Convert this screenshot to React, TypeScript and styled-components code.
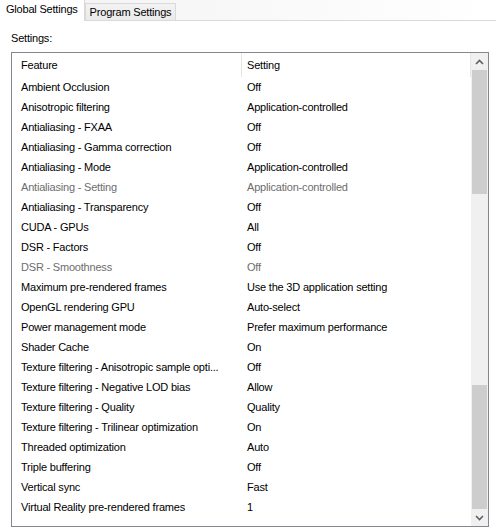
import React from "react";
import styled, { createGlobalStyle } from "styled-components";

const Global = createGlobalStyle`
  html, body { margin: 0; padding: 0; background: #ffffff; }
  body { font-family: "Liberation Sans", Arial, sans-serif; font-size: 11px; letter-spacing: -0.2px; color: #000; }
`;

const Page = styled.div`
  width: 496px;
  height: 530px;
  display: flex;
  flex-direction: column;
  overflow: hidden;
  background: #fff;
`;

const TabBar = styled.div`
  display: flex;
  align-items: flex-end;
  height: 21px;
  background: linear-gradient(to right, #f2f2f2, #ffffff);
`;

const Tab = styled.div<{ $active?: boolean }>`
  box-sizing: border-box;
  height: ${(p) => (p.$active ? "21px" : "18px")};
  padding: ${(p) => (p.$active ? "0 6px 3px 6px" : "0 4px 0 4px")};
  display: flex;
  align-items: center;
  background: ${(p) => (p.$active ? "#ffffff" : "linear-gradient(#f3f3f3, #ebebeb)")};
  border: 1px solid #d9d9d9;
  border-left: ${(p) => (p.$active ? "none" : "1px solid #d9d9d9")};
  border-bottom: ${(p) => (p.$active ? "none" : "1px solid #d9d9d9")};
  border-top: ${(p) => (p.$active ? "none" : "1px solid #d9d9d9")};
`;

const TabFill = styled.div`
  flex: 1;
  height: 1px;
  background: #d9d9d9;
`;

const Panel = styled.div`
  flex: 1;
  display: flex;
  flex-direction: column;
  padding: 9px 7px 4px 11px;
`;

const Label = styled.div`
  height: 21px;
  line-height: 14px;
  padding-top: 1px;
`;

const ListBox = styled.div`
  box-sizing: border-box;
  height: 475px;
  border: 1px solid #828790;
  display: flex;
`;

const Content = styled.div`
  flex: 1;
  display: flex;
  flex-direction: column;
`;

const Row = styled.div<{ $header?: boolean; $disabled?: boolean }>`
  display: grid;
  grid-template-columns: 230px 1fr;
  height: ${(p) => (p.$header ? "24px" : "20px")};
  align-items: center;
  color: ${(p) => (p.$disabled ? "#6d6d6d" : "#000")};
`;

const Cell = styled.div<{ $first?: boolean; $divider?: boolean }>`
  padding-left: ${(p) => (p.$first ? "9px" : "5px")};
  white-space: nowrap;
  overflow: hidden;
  height: 100%;
  display: flex;
  align-items: center;
  border-right: ${(p) => (p.$divider ? "1px solid #e5e5e5" : "none")};
`;

const Scrollbar = styled.div`
  width: 17px;
  display: flex;
  flex-direction: column;
  background: #f0f0f0;
`;

const Arrow = styled.div`
  height: 17px;
  display: flex;
  align-items: center;
  justify-content: center;
`;

const Thumb = styled.div<{ $h: number }>`
  height: ${(p) => p.$h}px;
  margin: 0 1px;
  background: #cdcdcd;
`;

const Track = styled.div`
  flex: 1;
`;

const rows: [string, string, boolean?][] = [
  ["Ambient Occlusion", "Off"],
  ["Anisotropic filtering", "Application-controlled"],
  ["Antialiasing - FXAA", "Off"],
  ["Antialiasing - Gamma correction", "Off"],
  ["Antialiasing - Mode", "Application-controlled"],
  ["Antialiasing - Setting", "Application-controlled", true],
  ["Antialiasing - Transparency", "Off"],
  ["CUDA - GPUs", "All"],
  ["DSR - Factors", "Off"],
  ["DSR - Smoothness", "Off", true],
  ["Maximum pre-rendered frames", "Use the 3D application setting"],
  ["OpenGL rendering GPU", "Auto-select"],
  ["Power management mode", "Prefer maximum performance"],
  ["Shader Cache", "On"],
  ["Texture filtering - Anisotropic sample opti...", "Off"],
  ["Texture filtering - Negative LOD bias", "Allow"],
  ["Texture filtering - Quality", "Quality"],
  ["Texture filtering - Trilinear optimization", "On"],
  ["Threaded optimization", "Auto"],
  ["Triple buffering", "Off"],
  ["Vertical sync", "Fast"],
  ["Virtual Reality pre-rendered frames", "1"],
];

const Chevron = ({ up }: { up?: boolean }) => (
  <svg width="9" height="6" viewBox="0 0 9 6">
    <path
      d={up ? "M1 5 L4.5 1.5 L8 5" : "M1 1 L4.5 4.5 L8 1"}
      fill="none"
      stroke="#606060"
      strokeWidth="1.6"
    />
  </svg>
);

export default function App() {
  return (
    <Page>
      <Global />
      <TabBar>
        <Tab $active>Global Settings</Tab>
        <Tab>Program Settings</Tab>
        <TabFill />
      </TabBar>
      <Panel>
        <Label>Settings:</Label>
        <ListBox>
          <Content>
            <Row $header>
              <Cell $first $divider>Feature</Cell>
              <Cell $divider>Setting</Cell>
            </Row>
            {rows.map(([f, s, d]) => (
              <Row key={f} $disabled={d}>
                <Cell $first>{f}</Cell>
                <Cell>{s}</Cell>
              </Row>
            ))}
          </Content>
          <Scrollbar>
            <Arrow>
              <Chevron up />
            </Arrow>
            <Thumb $h={124} />
            <Track />
            <Thumb $h={124} />
            <Arrow>
              <Chevron />
            </Arrow>
          </Scrollbar>
        </ListBox>
      </Panel>
    </Page>
  );
}
